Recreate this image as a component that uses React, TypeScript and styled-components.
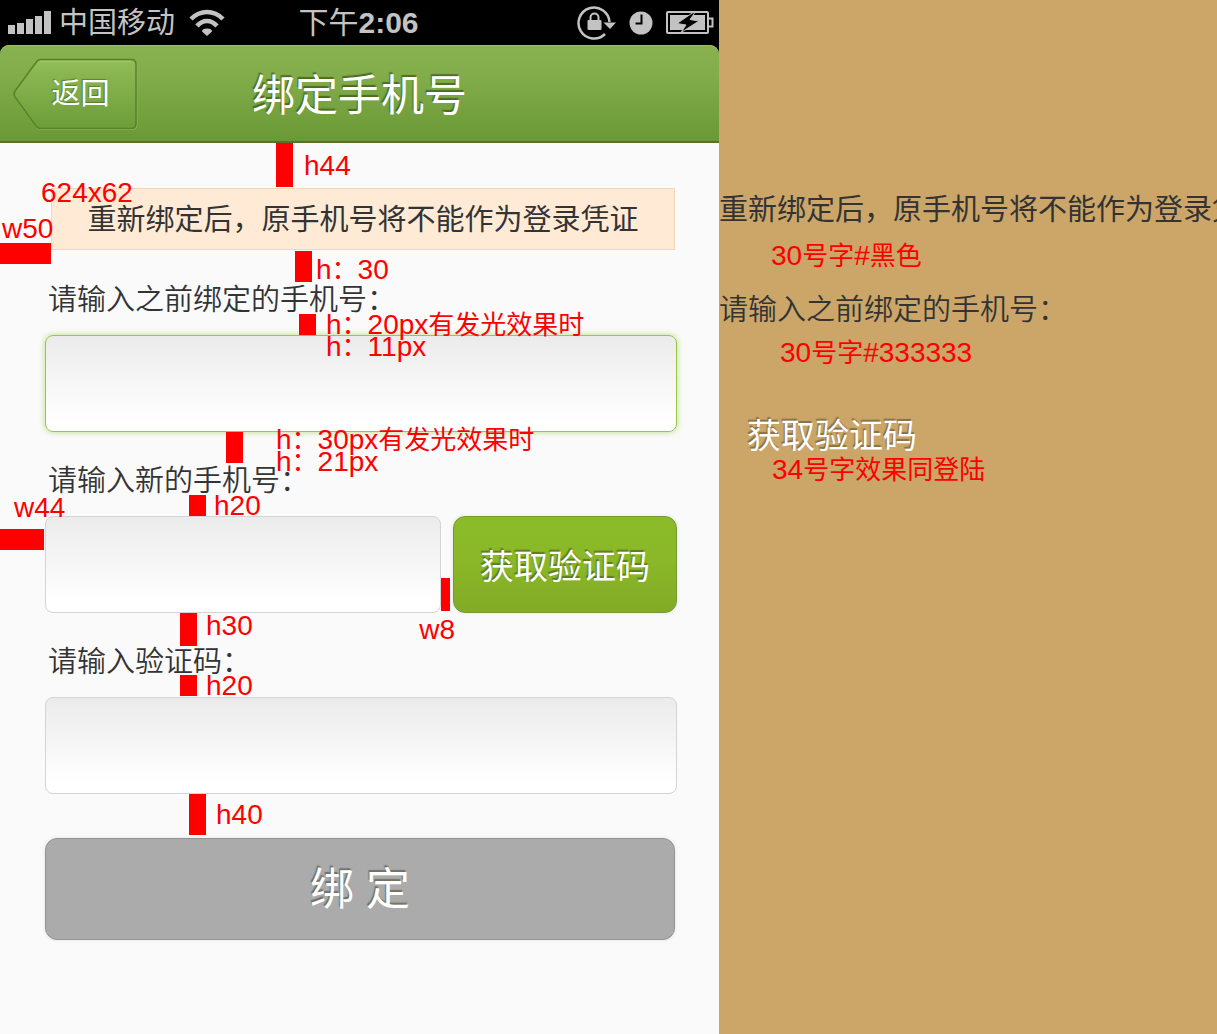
import React from "react";
import styled, { createGlobalStyle, css } from "styled-components";

const GlobalStyle = createGlobalStyle`
  * { box-sizing: border-box; }
  body {
    margin: 0;
    background: #cba668;
    font-family: "Liberation Sans", "Noto Sans CJK SC", sans-serif;
    overflow-x: hidden;
  }
  h1, p { margin: 0; font-weight: 400; }
  button, input { font-family: inherit; }
`;

const Page = styled.div`
  display: grid;
  grid-template-columns: 719fr 498fr;
  min-height: 100vh;
`;

const Phone = styled.section`
  display: flex;
  flex-direction: column;
  min-width: 0;
  background: #fafafa;
`;

const Top = styled.div`
  background: #000;
`;

const StatusBar = styled.div`
  display: grid;
  grid-template-columns: 1fr auto 1fr;
  align-items: center;
  height: 45px;
  padding: 0 5px 0 7px;
  color: #c3c3c3;
`;

const StatusGroup = styled.div<{ $end?: boolean; $gap: number }>`
  display: flex;
  align-items: center;
  gap: ${(p) => p.$gap}px;
  justify-content: ${(p) => (p.$end ? "flex-end" : "flex-start")};
`;

const Carrier = styled.span`
  padding-top: 2px;
  font-size: 29px;
  line-height: 43px;
  margin-right: 6px;
`;

const Clock = styled.time`
  margin-right: 4px;
  font-size: 30px;
  line-height: 45px;
  b { font-weight: 700; }
`;

const NavBar = styled.header`
  display: grid;
  grid-template-columns: 1fr auto 1fr;
  align-items: center;
  height: 98px;
  padding: 0 12px;
  border-radius: 9px 9px 0 0;
  border-bottom: 2px solid #5d6e28;
  box-shadow: inset 0 1px 0 #9ac166;
  background: linear-gradient(#88b24f, #83ad4b 30%, #699935);
`;

const BackButton = styled.button`
  display: grid;
  width: 126px;
  height: 74px;
  padding: 0;
  border: 0;
  background: none;
  color: #fff;
  > * { grid-area: 1 / 1; }
`;

const BackLabel = styled.span`
  padding-left: 11px;
  font-size: 29px;
  line-height: 76px;
  text-shadow: -1px -1px 1px rgba(50, 80, 10, 0.5);
`;

const Title = styled.h1`
  padding-top: 5px;
  color: #fff;
  font-size: 43px;
  line-height: 60px;
  text-shadow: -1px -2px 1px rgba(50, 75, 15, 0.65);
`;

const Section = styled.div<{ $top: number }>`
  position: relative;
  padding: ${(p) => p.$top}px 42px 0 45px;
`;

const Notice = styled.p`
  margin: 0 2px 0 6px;
  border: 1px solid #f5d6bb;
  background: #ffebd5;
  color: #333;
  font-size: 29px;
  line-height: 62px;
  height: 62px;
  text-align: center;
  white-space: nowrap;
`;

const Label = styled.label`
  display: block;
  margin-bottom: 15px;
  padding-left: 3px;
  color: #333;
  font-size: 29px;
  font-weight: 350;
  line-height: 40px;
`;

const Row = styled.div`
  display: flex;
  gap: 12px;
`;

const Field = styled.input<{ $glow?: boolean }>`
  display: block;
  flex: 1;
  width: 100%;
  min-width: 0;
  height: 97px;
  padding: 0 20px;
  border: 1px solid #d4d4d4;
  border-radius: 8px;
  outline: 0;
  background: linear-gradient(#ebebeb, #fff 90%);
  color: #333;
  font-size: 29px;
  ${(p) =>
    p.$glow &&
    css`
      border-color: #9ac644;
      box-shadow: 0 0 6px #b9dc80;
    `}
`;

const raised = css`
  color: #fff;
  text-shadow: -1px -2px 1px rgba(50, 60, 30, 0.5);
  box-shadow: 0 0 3px 1px #ececec;
`;

const CodeButton = styled.button`
  ${raised}
  width: 224px;
  height: 97px;
  padding: 0;
  border: 1px solid #739a33;
  border-radius: 12px;
  background: linear-gradient(#8cbb29, #8ab828 45%, #83ab26);
  font-size: 34px;
`;

const SubmitButton = styled.button`
  ${raised}
  display: block;
  width: calc(100% - 2px);
  height: 102px;
  padding: 0 0 6px;
  border: 1px solid #949494;
  border-radius: 12px;
  background: #ababab;
  font-size: 44px;
`;

/* Red measurement marks laid over the screen: a bar with its caption */
const Mark = styled.div<{ $x: number; $y: number; $gap?: number; $column?: boolean }>`
  position: absolute;
  z-index: 1;
  left: ${(p) => p.$x}px;
  top: ${(p) => p.$y}px;
  display: flex;
  flex-direction: ${(p) => (p.$column ? "column" : "row")};
  align-items: flex-start;
  gap: ${(p) => p.$gap ?? 0}px;
  color: #f00;
  font-size: 28px;
  line-height: 22px;
  white-space: nowrap;
`;

const ButtonGapMark = styled(Mark)`
  left: auto;
  right: 264px;
`;

const Bar = styled.i<{ $w: number; $h: number; $end?: boolean }>`
  width: ${(p) => p.$w}px;
  height: ${(p) => p.$h}px;
  background: #f00;
  ${(p) =>
    p.$end &&
    css`
      align-self: flex-end;
      margin-right: 5px;
    `}
`;

const Caption = styled.div<{ $drop?: number; $indent?: number }>`
  display: flex;
  flex-direction: column;
  margin-top: ${(p) => p.$drop ?? 0}px;
  padding-left: ${(p) => p.$indent ?? 0}px;
`;

const Han = styled.span`
  font-size: 26px;
`;

const Spec = styled.aside`
  min-width: 0;
  padding-top: 190px;
  overflow: hidden;
  background: #cba668;
`;

const Sample = styled.p<{ $light?: boolean }>`
  color: #333;
  font-size: 29px;
  font-weight: ${(p) => (p.$light ? 350 : 400)};
  line-height: 40px;
  white-space: nowrap;
`;

const ButtonSample = styled(Sample)`
  padding: 49px 0 0 28px;
  color: #fff;
  font-size: 34px;
  text-shadow: -1px -2px 1px rgba(70, 60, 30, 0.5);
`;

const SpecNote = styled.p<{ $indent: number; $before: number; $after: number }>`
  padding: ${(p) => p.$before}px 0 ${(p) => p.$after}px ${(p) => p.$indent}px;
  color: #f00;
  font-size: 28px;
  line-height: 28px;
  white-space: nowrap;
`;

/* Chinese runs are set slightly smaller than the digits beside them */
function Mixed({ text }: { text: string }) {
  return (
    <span>
      {text.split(/([^\x00-\x7f]+)/).map((part, i) =>
        i % 2 ? <Han key={i}>{part}</Han> : part
      )}
    </span>
  );
}

function SignalIcon() {
  return (
    <svg width="44" height="24" viewBox="0 0 44 24" fill="#c3c3c3" aria-hidden="true">
      <rect x="1" y="14" width="7" height="9" />
      <rect x="10" y="12" width="7" height="11" />
      <rect x="19" y="8" width="7" height="15" />
      <rect x="28" y="5" width="7" height="18" />
      <rect x="37" y="0" width="7" height="23" />
    </svg>
  );
}

function WifiIcon() {
  return (
    <svg width="36" height="27" viewBox="0 0 36 27" aria-hidden="true">
      <g fill="none" stroke="#c3c3c3" strokeWidth="4.500">
        <path d="M2 10Q9 3 18 3t16 7" />
        <path d="M8 17Q12.500 12 18 12t10 5" />
      </g>
      <path d="M13 22.500q0-3 5-3t5 3L18 27z" fill="#c3c3c3" />
    </svg>
  );
}

function LockIcon() {
  return (
    <svg width="39" height="35" viewBox="0 0 39 35" aria-hidden="true">
      <path d="M28 29A15.500 15.500 0 1 1 32.500 17" fill="none" stroke="#c3c3c3" strokeWidth="2.500" />
      <path d="M26.500 17.500H39L33 24z" fill="#c3c3c3" />
      <rect x="10.500" y="15" width="14" height="10" rx="1" fill="#c3c3c3" />
      <path d="M13.500 16v-3.500a4 4 0 0 1 8 0V16" fill="none" stroke="#c3c3c3" strokeWidth="2" />
    </svg>
  );
}

function AlarmIcon() {
  return (
    <svg width="24" height="24" viewBox="0 0 24 24" aria-hidden="true">
      <circle cx="12" cy="12" r="11.500" fill="#c3c3c3" />
      <path d="M12.500 3.500v9H6.500" fill="none" stroke="#000" strokeWidth="2" />
    </svg>
  );
}

function BatteryIcon() {
  return (
    <svg width="48" height="25" viewBox="0 0 48 25" aria-hidden="true">
      <rect x="1" y="2" width="41" height="21" rx="1" fill="none" stroke="#c3c3c3" strokeWidth="2" />
      <rect x="4" y="5" width="35" height="15" fill="#c3c3c3" />
      <path d="M43 8.500h3.500v8H43" fill="none" stroke="#c3c3c3" strokeWidth="2" />
      <path d="M27 2.500L11 13.500l9 1.500-5 7.500L33 11l-9-1.500 5-7z" fill="#000" stroke="#c3c3c3" strokeWidth="1" />
    </svg>
  );
}

function BackShape() {
  return (
    <svg width="126" height="74" viewBox="0 0 126 74" aria-hidden="true">
      <defs>
        <linearGradient id="backFill" x1="0" y1="0" x2="0" y2="1">
          <stop offset="0" stopColor="#92bd57" />
          <stop offset="1" stopColor="#6c9c38" />
        </linearGradient>
      </defs>
      <path
        d="M28 4.500H120Q125 4.500 125 9.500V68.500Q125 73.500 120 73.500H29Q26 73.500 24 71L3 42Q1 39 3 36L24 7.500Q26 4.500 28 4.500Z"
        fill="none"
        stroke="#8fb75a"
      />
      <path
        d="M28 3.500H119Q124 3.500 124 8.500V67.500Q124 72.500 119 72.500H29Q26 72.500 24 70L3 41Q1 38 3 35L24 6.500Q26 3.500 28 3.500Z"
        fill="url(#backFill)"
        stroke="#56822c"
        strokeWidth="1.500"
      />
      <path d="M28 5.500H119" stroke="#a3cb6c" />
    </svg>
  );
}

export default function App() {
  return (
    <Page>
      <GlobalStyle />
      <Phone>
        <Top>
          <StatusBar>
            <StatusGroup $gap={8}>
              <SignalIcon />
              <Carrier>中国移动</Carrier>
              <WifiIcon />
            </StatusGroup>
            <Clock>
              下午<b>2:06</b>
            </Clock>
            <StatusGroup $gap={13} $end>
              <LockIcon />
              <AlarmIcon />
              <BatteryIcon />
            </StatusGroup>
          </StatusBar>
          <NavBar>
            <BackButton type="button">
              <BackShape />
              <BackLabel>返回</BackLabel>
            </BackButton>
            <Title>绑定手机号</Title>
          </NavBar>
        </Top>

        <Section $top={45}>
          <Notice>重新绑定后，原手机号将不能作为登录凭证</Notice>
          <Mark $x={276} $y={0} $gap={11}>
            <Bar $w={17} $h={44} />
            <Caption $drop={12}>h44</Caption>
          </Mark>
          <Mark $x={41} $y={39}>624x62</Mark>
          <Mark $x={0} $y={75} $gap={3} $column>
            <Caption $indent={2}>w50</Caption>
            <Bar $w={51} $h={21} />
          </Mark>
        </Section>

        <Section $top={30}>
          <Label htmlFor="old-phone">请输入之前绑定的手机号：</Label>
          <Field id="old-phone" type="tel" $glow />
          <Mark $x={295} $y={1} $gap={4}>
            <Bar $w={17} $h={31} />
            <Caption $drop={8}><Mixed text="h：30" /></Caption>
          </Mark>
          <Mark $x={299} $y={64} $gap={10}>
            <Bar $w={17} $h={21} />
            <Caption>
              <Mixed text="h：20px有发光效果时" />
              <Mixed text="h：11px" />
            </Caption>
          </Mark>
        </Section>

        <Section $top={29}>
          <Label htmlFor="new-phone">请输入新的手机号：</Label>
          <Row>
            <Field id="new-phone" type="tel" />
            <CodeButton type="button">获取验证码</CodeButton>
          </Row>
          <Mark $x={226} $y={0} $gap={33}>
            <Bar $w={17} $h={31} />
            <Caption $drop={-3}>
              <Mixed text="h：30px有发光效果时" />
              <Mixed text="h：21px" />
            </Caption>
          </Mark>
          <Mark $x={189} $y={63} $gap={8}>
            <Bar $w={17} $h={21} />
            <Caption>h20</Caption>
          </Mark>
          <Mark $x={0} $y={65} $gap={10} $column>
            <Caption $indent={14}>w44</Caption>
            <Bar $w={44} $h={21} />
          </Mark>
          <ButtonGapMark $x={0} $y={146} $gap={8} $column>
            <Bar $w={9} $h={33} $end />
            <Caption>w8</Caption>
          </ButtonGapMark>
        </Section>

        <Section $top={29}>
          <Label htmlFor="code">请输入验证码：</Label>
          <Field id="code" type="text" />
          <Mark $x={180} $y={0} $gap={9}>
            <Bar $w={17} $h={33} />
            <Caption $drop={2}>h30</Caption>
          </Mark>
          <Mark $x={180} $y={62} $gap={9}>
            <Bar $w={17} $h={21} />
            <Caption>h20</Caption>
          </Mark>
        </Section>

        <Section $top={44}>
          <SubmitButton type="button">绑 定</SubmitButton>
          <Mark $x={189} $y={0} $gap={10}>
            <Bar $w={17} $h={41} />
            <Caption $drop={10}>h40</Caption>
          </Mark>
        </Section>
      </Phone>

      <Spec>
        <Sample>重新绑定后，原手机号将不能作为登录凭证</Sample>
        <SpecNote $indent={52} $before={12} $after={20}>
          <Mixed text="30号字#黑色" />
        </SpecNote>
        <Sample $light>请输入之前绑定的手机号：</Sample>
        <SpecNote $indent={61} $before={9} $after={0}>
          <Mixed text="30号字#333333" />
        </SpecNote>
        <ButtonSample>获取验证码</ButtonSample>
        <SpecNote $indent={53} $before={0} $after={0}>
          <Mixed text="34号字效果同登陆" />
        </SpecNote>
      </Spec>
    </Page>
  );
}
